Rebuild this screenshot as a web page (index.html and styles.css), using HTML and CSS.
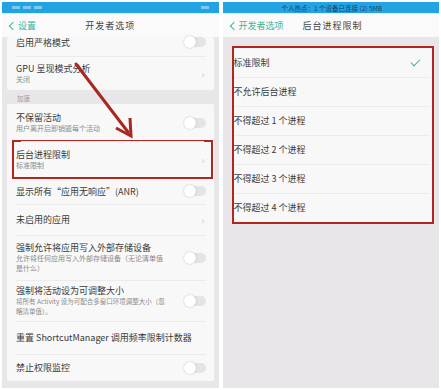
FILE: index.html
```html
<!DOCTYPE html>
<html lang="zh-CN">
<head>
    <meta charset="UTF-8">
    <meta name="viewport" content="width=device-width, initial-scale=1.0">
    <title>后台进程限制</title>
    <link rel="stylesheet" href="styles.css">
</head>
<body>
    <div class="shots">
        <!-- left phone: developer options list -->
        <div class="phone">
            <div class="status">
                <span class="status-icons"><i></i><i></i><i></i></span>
                <span class="status-right"></span>
            </div>
            <div class="nav">
                <span class="back"><span class="chev"></span>设置</span>
                <span class="title">开发者选项</span>
            </div>
            <div class="content">
                <div class="card">
                    <div class="row cut">
                        <div class="text"><div class="main">启用严格模式</div></div>
                        <span class="toggle"></span>
                    </div>
                    <div class="row tall">
                        <div class="text"><div class="main">GPU 呈现模式分析</div><div class="sub">关闭</div></div>
                        <span class="arrow">›</span>
                    </div>
                </div>
                <div class="section">加速</div>
                <div class="card">
                    <div class="row h37">
                        <div class="text"><div class="main">不保留活动</div><div class="sub">用户离开后即销毁每个活动</div></div>
                        <span class="toggle"></span>
                    </div>
                    <div class="row h37 marked">
                        <div class="text"><div class="main">后台进程限制</div><div class="sub">标准限制</div></div>
                        <span class="arrow">›</span>
                    </div>
                    <div class="row h26">
                        <div class="text"><div class="main">显示所有“应用无响应”(ANR)</div></div>
                        <span class="toggle"></span>
                    </div>
                    <div class="row h31">
                        <div class="text"><div class="main">未启用的应用</div></div>
                        <span class="arrow">›</span>
                    </div>
                    <div class="row h45">
                        <div class="text"><div class="main">强制允许将应用写入外部存储设备</div><div class="sub">允许将任何应用写入外部存储设备（无论清单值是什么）</div></div>
                        <span class="toggle"></span>
                    </div>
                    <div class="row h41">
                        <div class="text"><div class="main">强制将活动设为可调整大小</div><div class="sub narrow">将所有 Activity 设为可配合多窗口环境调整大小（忽略清单值）。</div></div>
                        <span class="toggle"></span>
                    </div>
                    <div class="row h33">
                        <div class="text"><div class="main">重置 ShortcutManager 调用频率限制计数器</div></div>
                    </div>
                    <div class="row h27">
                        <div class="text"><div class="main">禁止权限监控</div></div>
                        <span class="toggle"></span>
                    </div>
                </div>
            </div>
            <svg class="pointer" width="80" height="90" viewBox="0 0 80 90">
                <line x1="4" y1="4" x2="56" y2="72" stroke="#a8281f" stroke-width="3" stroke-linecap="round"/>
                <polyline points="44,68 59,76 58,58" fill="none" stroke="#a8281f" stroke-width="3" stroke-linejoin="miter"/>
            </svg>
        </div>

        <!-- right phone: background process limit -->
        <div class="phone">
            <div class="status">
                <span class="status-text">个人热点：1 个设备已连接 (2) 5MB</span>
            </div>
            <div class="nav">
                <span class="back"><span class="chev"></span>开发者选项</span>
                <span class="title right-title">后台进程限制</span>
            </div>
            <div class="content">
                <div class="card limits">
                    <div class="option">标准限制<span class="check"></span></div>
                    <div class="option">不允许后台进程</div>
                    <div class="option">不得超过 1 个进程</div>
                    <div class="option">不得超过 2 个进程</div>
                    <div class="option">不得超过 3 个进程</div>
                    <div class="option">不得超过 4 个进程</div>
                </div>
            </div>
        </div>
    </div>
</body>
</html>
```

FILE: styles.css
```css
body {
    margin: 0;
    background-color: #fff;
    font-family: "Noto Sans CJK SC", "Noto Sans", sans-serif;
    color: #333;
}

.shots {
    display: flex;
    gap: 4px;
    padding: 2px;
    width: 441px;
    height: 390px;
    box-sizing: border-box;
}

.phone {
    position: relative;
    flex: 1;
    display: flex;
    flex-direction: column;
    background-color: #e8e6e9;
    overflow: hidden;
}

.status {
    height: 11px;
    background-color: #24a3e4;
    display: flex;
    align-items: center;
    justify-content: space-between;
    padding: 0 10px;
    border-bottom: 1px solid #d8eef8;
}

.status-icons {
    display: flex;
    gap: 3px;
}

.status-icons i {
    width: 8px;
    height: 3px;
    background-color: #7cc8ee;
}

.status-right {
    width: 8px;
    height: 3px;
    background-color: #7cc8ee;
}

.status-text {
    flex: 1;
    text-align: center;
    font-size: 6.5px;
    color: #173f66;
    padding-left: 2px;
}

.nav {
    height: 23px;
    background-color: #fafafa;
    display: flex;
    align-items: center;
    position: relative;
    padding-left: 8px;
    font-size: 9px;
}

.back {
    display: flex;
    align-items: center;
    color: #3fb39b;
}

.chev {
    width: 5px;
    height: 5px;
    border-left: 1px solid #3fb39b;
    border-bottom: 1px solid #3fb39b;
    transform: rotate(45deg);
    margin-right: 2px;
}

.title {
    position: absolute;
    left: 0;
    right: 0;
    text-align: center;
    letter-spacing: 1px;
    color: #444;
    pointer-events: none;
}

.right-title {
    left: 10px;
    right: auto;
    margin-left: 70px;
}

.content {
    flex: 1;
    padding: 0 5px;
}

.card {
    background-color: #f8f8f8;
    border-radius: 2px;
}

.row {
    display: flex;
    align-items: center;
    justify-content: space-between;
    padding: 0 8px 0 9px;
    position: relative;
}

.row + .row::before {
    content: "";
    position: absolute;
    top: 0;
    left: 8px;
    right: 8px;
    height: 1px;
    background-color: #ebebeb;
}

.text {
    flex: 1;
    min-width: 0;
}

.main {
    font-size: 9px;
    line-height: 11px;
    color: #3a3a3a;
}

.sub {
    font-size: 7px;
    line-height: 10px;
    color: #8a8a8a;
    padding-right: 20px;
}

.sub.narrow {
    font-size: 6.5px;
    padding-right: 14px;
}

.cut { height: 19px; align-items: flex-start; }
.tall { height: 34px; }
.h37 { height: 37px; }
.h26 { height: 26px; }
.h31 { height: 31px; }
.h45 { height: 45px; }
.h41 { height: 41px; }
.h33 { height: 33px; }
.h27 { height: 27px; }

.marked {
    outline: 2.5px solid #b0271f;
    outline-offset: -1px;
    margin: 0 2px 0 6px;
    padding-left: 3px;
    padding-right: 6px;
    z-index: 1;
}

.section {
    height: 14px;
    line-height: 16px;
    font-size: 6.5px;
    color: #9a9a9a;
    padding-left: 10px;
}

.toggle {
    width: 21px;
    height: 10px;
    border-radius: 5px;
    background-color: #e4e4e4;
    position: relative;
    flex-shrink: 0;
}

.toggle::after {
    content: "";
    position: absolute;
    left: -1px;
    top: -1px;
    width: 12px;
    height: 12px;
    border-radius: 50%;
    background-color: #fff;
    box-shadow: 0 0 2px rgba(0, 0, 0, 0.25);
}

.arrow {
    color: #c8c8c8;
    font-size: 10px;
    margin-right: 1px;
}

.pointer {
    position: absolute;
    left: 70px;
    top: 58px;
}

.limits {
    margin-top: 9px;
    margin-left: 4px;
    border: 2.5px solid #b0271f;
    border-radius: 0;
}

.option {
    height: 29px;
    display: flex;
    align-items: center;
    justify-content: space-between;
    font-size: 9px;
    color: #3a3a3a;
    padding-right: 12px;
    position: relative;
}

.option + .option::before {
    content: "";
    position: absolute;
    top: 0;
    left: 0;
    right: 2px;
    height: 1px;
    background-color: #ececec;
}

.check {
    width: 8px;
    height: 4px;
    border-left: 1px solid #3fb39b;
    border-bottom: 1px solid #3fb39b;
    transform: rotate(-45deg);
    margin-top: -3px;
}
```
